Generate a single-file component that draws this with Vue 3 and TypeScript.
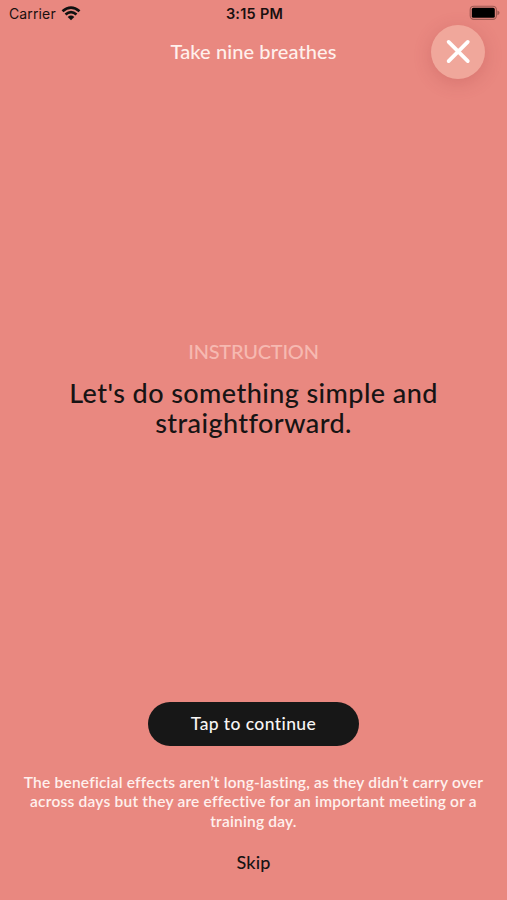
<script setup lang="ts">
const carrier = 'Carrier'
const time = '3:15 PM'
const title = 'Take nine breathes'
const headline: string[] = ["Let's do something simple and", 'straightforward.']
const note: string[] = [
  'The beneficial effects aren’t long-lasting, as they didn’t carry over',
  'across days but they are effective for an important meeting or a',
  'training day.',
]
</script>

<template>
  <main class="screen">
    <header class="status">
      <div class="network">
        <span class="carrier">{{ carrier }}</span>
        <svg class="wifi" width="20" height="15" viewBox="0 0 20 15" aria-hidden="true">
          <g fill="none" stroke="#111" stroke-width="2.7">
            <path d="M1.5 5.3Q10 -2.1 18.5 5.3" />
            <path d="M4.5 8.6Q10 3.8 15.5 8.6" />
          </g>
          <path fill="#111" d="M6.7 10.9Q10 8 13.3 10.9L10 14.3Z" />
        </svg>
      </div>
      <span class="time">{{ time }}</span>
      <svg class="battery" width="31" height="16" viewBox="0 0 31 16" aria-hidden="true">
        <rect x="1.2" y="1.2" width="26.2" height="13.2" rx="3.6" fill="none" stroke="#a05a53" stroke-width="1.1" />
        <rect x="2.8" y="2.8" width="23" height="10" rx="1.6" fill="#000" />
        <path d="M28.4 5.4Q30.6 6.2 30.6 7.8T28.4 10.2Z" fill="#a05a53" />
      </svg>
    </header>

    <div class="topbar">
      <h1 class="title">{{ title }}</h1>
      <button class="close" type="button" aria-label="Close">
        <svg width="54" height="54" viewBox="0 0 54 54">
          <path d="M17.6 16.9L36.8 36.1M36.8 16.9L17.6 36.1" stroke="#fff" stroke-width="3.7" stroke-linecap="round" />
        </svg>
      </button>
    </div>

    <section class="instruction">
      <p class="label">INSTRUCTION</p>
      <h2 class="headline">
        <span v-for="line in headline" :key="line" class="line">{{ line }}</span>
      </h2>
    </section>

    <footer class="actions">
      <button class="continue" type="button">Tap to continue</button>
      <p class="note">
        <span v-for="line in note" :key="line" class="line">{{ line }}</span>
      </p>
      <button class="skip" type="button">Skip</button>
    </footer>
  </main>
</template>

<style>
body {
  margin: 0;
  background: #e98880;
}
</style>

<style scoped>
.screen {
  display: flex;
  flex-direction: column;
  width: 100%;
  height: 900px;
  overflow: hidden;
  background: #e98880;
  color: #171414;
  font-family: Lato, sans-serif;
  font-variant-ligatures: none;
  text-align: center;
}
h1, h2, p {
  margin: 0;
  font-weight: 500;
}
button {
  border: 0;
  padding: 0;
  background: none;
  font: inherit;
  color: inherit;
}
.status {
  display: grid;
  grid-template-columns: 1fr auto 1fr;
  box-sizing: border-box;
  height: 25px;
  padding: 1px 7px 0 9px;
  align-items: center;
  font-family: Inter, sans-serif;
  color: #19100f;
}
.network {
  display: flex;
  align-items: center;
  gap: 5px;
}
.carrier {
  font-size: 14px;
  line-height: 18px;
  padding-top: 2px;
  letter-spacing: 0.13px;
}
.time {
  font-size: 14.5px;
  font-weight: 600;
  line-height: 18px;
  padding-top: 2px;
  letter-spacing: 0.25px;
}
.battery {
  justify-self: end;
}
.topbar {
  display: grid;
  grid-template-columns: 76px 1fr 76px;
  height: 54px;
}
.title {
  grid-column: 2;
  color: #fff0ec;
  font-size: 20px;
  line-height: 52px;
  letter-spacing: 0.1px;
}
.close {
  width: 54px;
  height: 54px;
  border-radius: 50%;
  background: #f0a79b;
  box-shadow: 0 4px 18px rgba(160, 55, 60, 0.24);
}
.close svg {
  display: block;
}
.instruction {
  padding-top: 260px;
}
.label {
  color: #f6b9b1;
  font-size: 20px;
  font-weight: 500;
  line-height: 24px;
  letter-spacing: -0.25px;
}
.headline {
  padding-top: 15px;
  font-size: 27px;
  line-height: 30px;
  letter-spacing: 0.42px;
}
.line {
  display: block;
  white-space: nowrap;
}
.actions {
  display: flex;
  flex-direction: column;
  align-items: center;
  margin-top: auto;
  height: 198px;
}
.continue {
  box-sizing: border-box;
  width: 211px;
  height: 44px;
  padding-bottom: 2px;
  border-radius: 22px;
  background: #171717;
  color: #f7f5f4;
  font-size: 17.5px;
  font-weight: 500;
  letter-spacing: 0.4px;
}
.note {
  padding-top: 26.5px;
  color: #fff0ed;
  font-size: 15.5px;
  font-weight: 600;
  line-height: 19.5px;
  letter-spacing: 0.22px;
}
.skip {
  margin-top: 19.5px;
  font-size: 18px;
  font-weight: 500;
  line-height: 22px;
  letter-spacing: 0.2px;
}
</style>
